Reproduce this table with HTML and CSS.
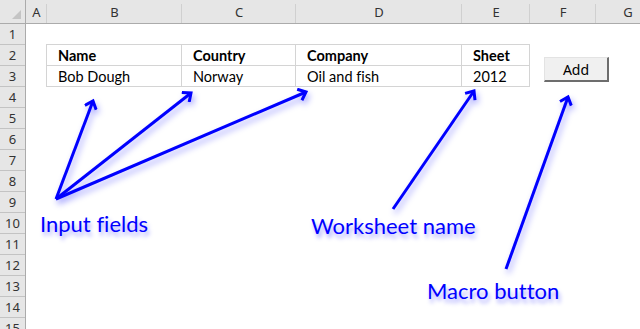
FILE: index.html
```html
<!DOCTYPE html>
<html lang="en">
<head>
    <meta charset="UTF-8">
    <meta name="viewport" content="width=device-width, initial-scale=1.0">
    <title>Add record macro</title>
    <link rel="stylesheet" href="styles.css">
</head>
<body>
    <div class="sheet">
        <div class="colheads">
            <div class="corner">
                <svg width="25" height="23" viewBox="0 0 25 23">
                    <polygon points="12,19 21,19 21,10" fill="#c4c4c4"/>
                </svg>
            </div>
            <div class="ch col-a">A</div>
            <div class="ch col-b">B</div>
            <div class="ch col-c">C</div>
            <div class="ch col-d">D</div>
            <div class="ch col-e">E</div>
            <div class="ch col-f">F</div>
            <div class="ch col-g">G</div>
        </div>

        <div class="body">
            <div class="rowheads">
                <div class="rh">1</div>
                <div class="rh">2</div>
                <div class="rh">3</div>
                <div class="rh">4</div>
                <div class="rh">5</div>
                <div class="rh">6</div>
                <div class="rh">7</div>
                <div class="rh">8</div>
                <div class="rh">9</div>
                <div class="rh">10</div>
                <div class="rh">11</div>
                <div class="rh">12</div>
                <div class="rh">13</div>
                <div class="rh">14</div>
                <div class="rh">15</div>
            </div>

            <div class="cells">
                <div class="spacer-row"></div>
                <div class="content">
                    <div class="spacer-a"></div>
                    <div class="tbl">
                        <div class="cell head col-b">Name</div>
                        <div class="cell head col-c">Country</div>
                        <div class="cell head col-d">Company</div>
                        <div class="cell head col-e">Sheet</div>
                        <div class="cell col-b">Bob Dough</div>
                        <div class="cell col-c">Norway</div>
                        <div class="cell col-d">Oil and fish</div>
                        <div class="cell col-e">2012</div>
                    </div>
                    <button class="macro-btn">Add</button>
                </div>
            </div>
        </div>

        <!-- callout arrows -->
        <svg class="arrows" width="640" height="329" viewBox="0 0 640 329">
            <defs>
                <marker id="head" markerWidth="14" markerHeight="14" refX="11" refY="7"
                        orient="auto" markerUnits="userSpaceOnUse">
                    <path d="M4,1 L11,7 L4,13" fill="none" stroke="#0000ff" stroke-width="3"/>
                </marker>
            </defs>
            <g stroke="#0000ff" stroke-width="3" fill="none" marker-end="url(#head)">
                <path d="M56 199 L93 101"/>
                <path d="M56 199 L191 93"/>
                <path d="M56 199 L306 92"/>
                <path d="M393 209 L474 91"/>
                <path d="M506 269 L568 97"/>
            </g>
        </svg>

        <div class="note note-input">Input fields</div>
        <div class="note note-sheet">Worksheet name</div>
        <div class="note note-macro">Macro button</div>
    </div>
</body>
</html>
```

FILE: styles.css
```css
body {
    margin: 0;
    background: #ffffff;
    overflow: hidden;
    font-family: "Noto Sans", sans-serif;
}
.sheet {
    position: relative;
    width: 640px;
    height: 329px;
    overflow: hidden;
}

/* column headers */
.colheads {
    display: flex;
    height: 24px;
    background: #e6e6e6;
    border-bottom: 1px solid #ababab;
    box-sizing: border-box;
}
.corner {
    width: 26px;
    flex: none;
    border-right: 1px solid #ababab;
    box-sizing: border-box;
}
.corner svg {
    display: block;
}
.ch {
    flex: none;
    box-sizing: border-box;
    padding-top: 2px;
    text-align: center;
    font-size: 13px;
    line-height: 21px;
    color: #333;
    background: linear-gradient(#d0d0d0, #d0d0d0) no-repeat right bottom / 1px 19px;
}
.col-a { width: 21px; }
.col-b { width: 135px; }
.col-c { width: 114px; }
.col-d { width: 166px; }
.col-e { width: 68px; }
.col-f { width: 66px; }
.col-g { width: 64px; }

/* row headers and cells */
.body {
    display: flex;
}
.rowheads {
    width: 26px;
    flex: none;
    background: #e6e6e6;
    border-right: 1px solid #ababab;
    box-sizing: border-box;
}
.rh {
    height: 21px;
    border-bottom: 1px solid #c3c3c3;
    box-sizing: border-box;
    text-align: center;
    font-size: 13px;
    line-height: 21px;
    color: #333;
}
.cells {
    flex: 1;
}
.spacer-row {
    height: 20px;
}
.content {
    display: flex;
    align-items: flex-start;
}
.spacer-a {
    width: 20px;
    flex: none;
}
.tbl {
    display: grid;
    grid-template-columns: 135px 114px 166px 68px;
    border-top: 1px solid #d4d4d4;
    border-left: 1px solid #d4d4d4;
}
.cell {
    height: 21px;
    box-sizing: border-box;
    border-right: 1px solid #d4d4d4;
    border-bottom: 1px solid #d4d4d4;
    padding: 2px 0 0 11px;
    font-family: "Lato", sans-serif;
    font-size: 14.5px;
    line-height: 18px;
    font-variant-ligatures: none;
    color: #000;
    white-space: nowrap;
}
.cell.head {
    font-weight: bold;
}
.macro-btn {
    margin: 13px 0 0 14px;
    width: 65px;
    height: 25px;
    padding: 0;
    background: #f0f0f0;
    border-style: solid;
    border-width: 1px 2px 2px 1px;
    border-color: #e3e3e3 #6d6d6d #6d6d6d #e3e3e3;
    font-family: "Noto Sans", sans-serif;
    font-size: 14px;
    color: #000;
}

/* annotations */
.arrows {
    position: absolute;
    left: 0;
    top: 0;
    filter: drop-shadow(2px 4px 3px rgba(0, 0, 255, 0.35));
}
.note {
    position: absolute;
    font-family: "Lato", sans-serif;
    font-size: 22px;
    line-height: 26px;
    font-variant-ligatures: none;
    color: #0000ff;
    white-space: nowrap;
    text-shadow: 2px 4px 4px rgba(0, 0, 255, 0.35);
}
.note-input {
    left: 40px;
    top: 211px;
}
.note-sheet {
    left: 311px;
    top: 213px;
}
.note-macro {
    left: 427px;
    top: 278px;
}
```
